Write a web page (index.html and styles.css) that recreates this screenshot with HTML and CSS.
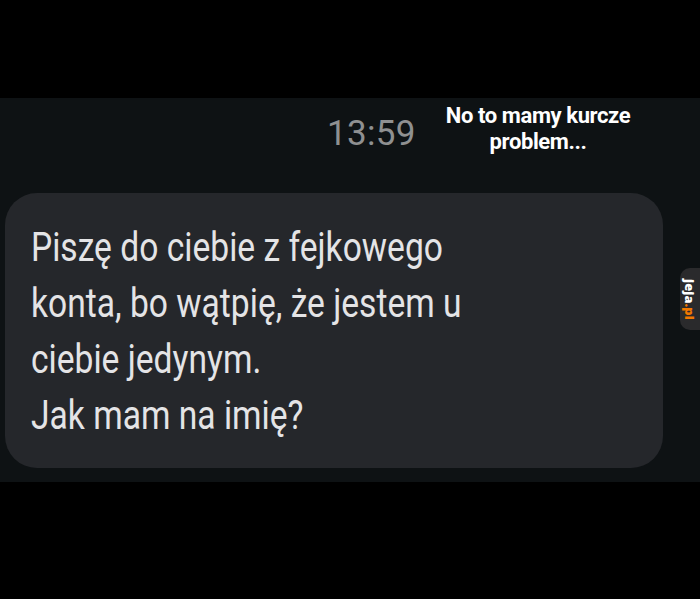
FILE: index.html
```html
<!DOCTYPE html>
<html lang="pl">
<head>
<meta charset="utf-8">
<link rel="stylesheet" href="styles.css">
</head>
<body>
<div class="page">
  <div class="panel">
    <div class="header">
      <span class="time">13:59</span>
    </div>
    <div class="caption">No to mamy kurcze<br>problem...</div>
    <div class="bubble">
      <p class="msg">Piszę do ciebie z fejkowego<br>konta, bo wątpię, że jestem u<br>ciebie jedynym.<br>Jak mam na imię?</p>
    </div>
    <div class="mark"><span class="mark-text">jeja<span class="pl">.pl</span></span></div>
  </div>
</div>
</body>
</html>
```

FILE: styles.css
```css
html, body {
  margin: 0;
  padding: 0;
  background: #000;
}
.page {
  width: 700px;
  height: 599px;
  padding-top: 98px;
  box-sizing: border-box;
}
.panel {
  position: relative;
  height: 384px;
  background: #0e1214;
  font-family: Roboto, "Noto Sans", sans-serif;
}
.header {
  padding-top: 16px;
  padding-left: 327px;
  height: 41px;
}
.time {
  font-size: 35px;
  line-height: 40px;
  color: #8f9091;
  letter-spacing: 0.3px;
}
.caption {
  position: absolute;
  left: 436px;
  top: 5px;
  width: 204px;
  text-align: center;
  color: #fff;
  font-weight: 700;
  font-size: 22px;
  line-height: 26px;
  letter-spacing: -0.4px;
}
.bubble {
  margin-top: 38px;
  margin-left: 5px;
  width: 658px;
  height: 275px;
  box-sizing: border-box;
  padding: 27px 0 0 26px;
  background: #25272b;
  border-radius: 32px;
}
.msg {
  margin: 0;
  color: #e4e4e6;
  font-size: 40px;
  line-height: 56px;
  white-space: nowrap;
  transform: scaleX(0.84);
  transform-origin: left top;
}
.mark {
  position: absolute;
  right: 0;
  top: 170px;
  width: 20px;
  height: 62px;
  background: #2a2a2c;
  border-radius: 10px 0 0 10px;
  display: flex;
  align-items: center;
  justify-content: center;
}
.mark-text {
  writing-mode: vertical-rl;
  font-family: "Open Sans", Roboto, sans-serif;
  font-weight: 800;
  font-size: 13px;
  line-height: 14px;
  color: #fff;
}
.pl {
  color: #f07800;
}
```
